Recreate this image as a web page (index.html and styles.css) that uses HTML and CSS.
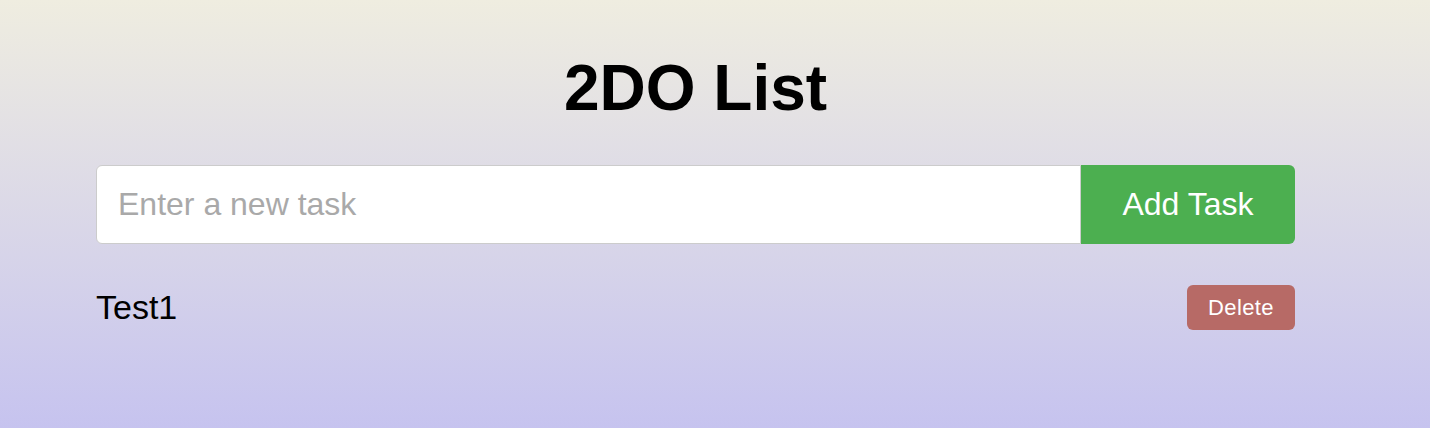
FILE: index.html
```html
<!DOCTYPE html>
<html lang="en">
<head>
<meta charset="utf-8">
<title>2DO List</title>
<link rel="stylesheet" href="styles.css">
</head>
<body>
  <main class="app">
    <h1 class="title">2DO List</h1>
    <form class="add-form">
      <input class="task-input" type="text" placeholder="Enter a new task">
      <button class="add-btn" type="button">Add Task</button>
    </form>
    <ul class="task-list">
      <li class="task">
        <span class="task-text">Test1</span>
        <button class="delete-btn" type="button">Delete</button>
      </li>
    </ul>
  </main>
</body>
</html>
```

FILE: styles.css
```css
html, body {
  margin: 0;
  padding: 0;
  height: 100%;
}

body {
  background: linear-gradient(to bottom, #efede0 0%, #c6c3ef 100%);
  font-family: "Liberation Sans", Arial, sans-serif;
  color: #000;
}

.app {
  width: 1199px;
  margin: 0 0 0 96px;
  padding-top: 51px;
}

.title {
  margin: 0 0 40px 0;
  font-size: 64px;
  font-weight: bold;
  line-height: normal;
  text-align: center;
}

.add-form {
  display: flex;
  margin: 0;
}

.task-input {
  flex: 1;
  height: 79px;
  box-sizing: border-box;
  padding: 0 21px;
  font-family: "Liberation Sans", Arial, sans-serif;
  font-size: 32px;
  border: 1px solid #cccccc;
  border-radius: 6px 0 0 6px;
  background: #ffffff;
  outline: none;
}

.task-input::placeholder {
  color: #a9a9a9;
}

.add-btn {
  width: 214px;
  height: 79px;
  border: none;
  border-radius: 0 6px 6px 0;
  background: #4caf50;
  color: #ffffff;
  font-family: "Liberation Sans", Arial, sans-serif;
  font-size: 32px;
  padding: 0;
}

.task-list {
  list-style: none;
  margin: 41px 0 0 0;
  padding: 0;
}

.task {
  display: flex;
  align-items: center;
  justify-content: space-between;
}

.task-text {
  font-size: 34px;
}

.delete-btn {
  width: 108px;
  height: 45px;
  border: none;
  border-radius: 6px;
  background: #b76a66;
  color: #ffffff;
  font-family: "Liberation Sans", Arial, sans-serif;
  font-size: 22px;
  letter-spacing: 0.4px;
  padding: 0;
}
```
